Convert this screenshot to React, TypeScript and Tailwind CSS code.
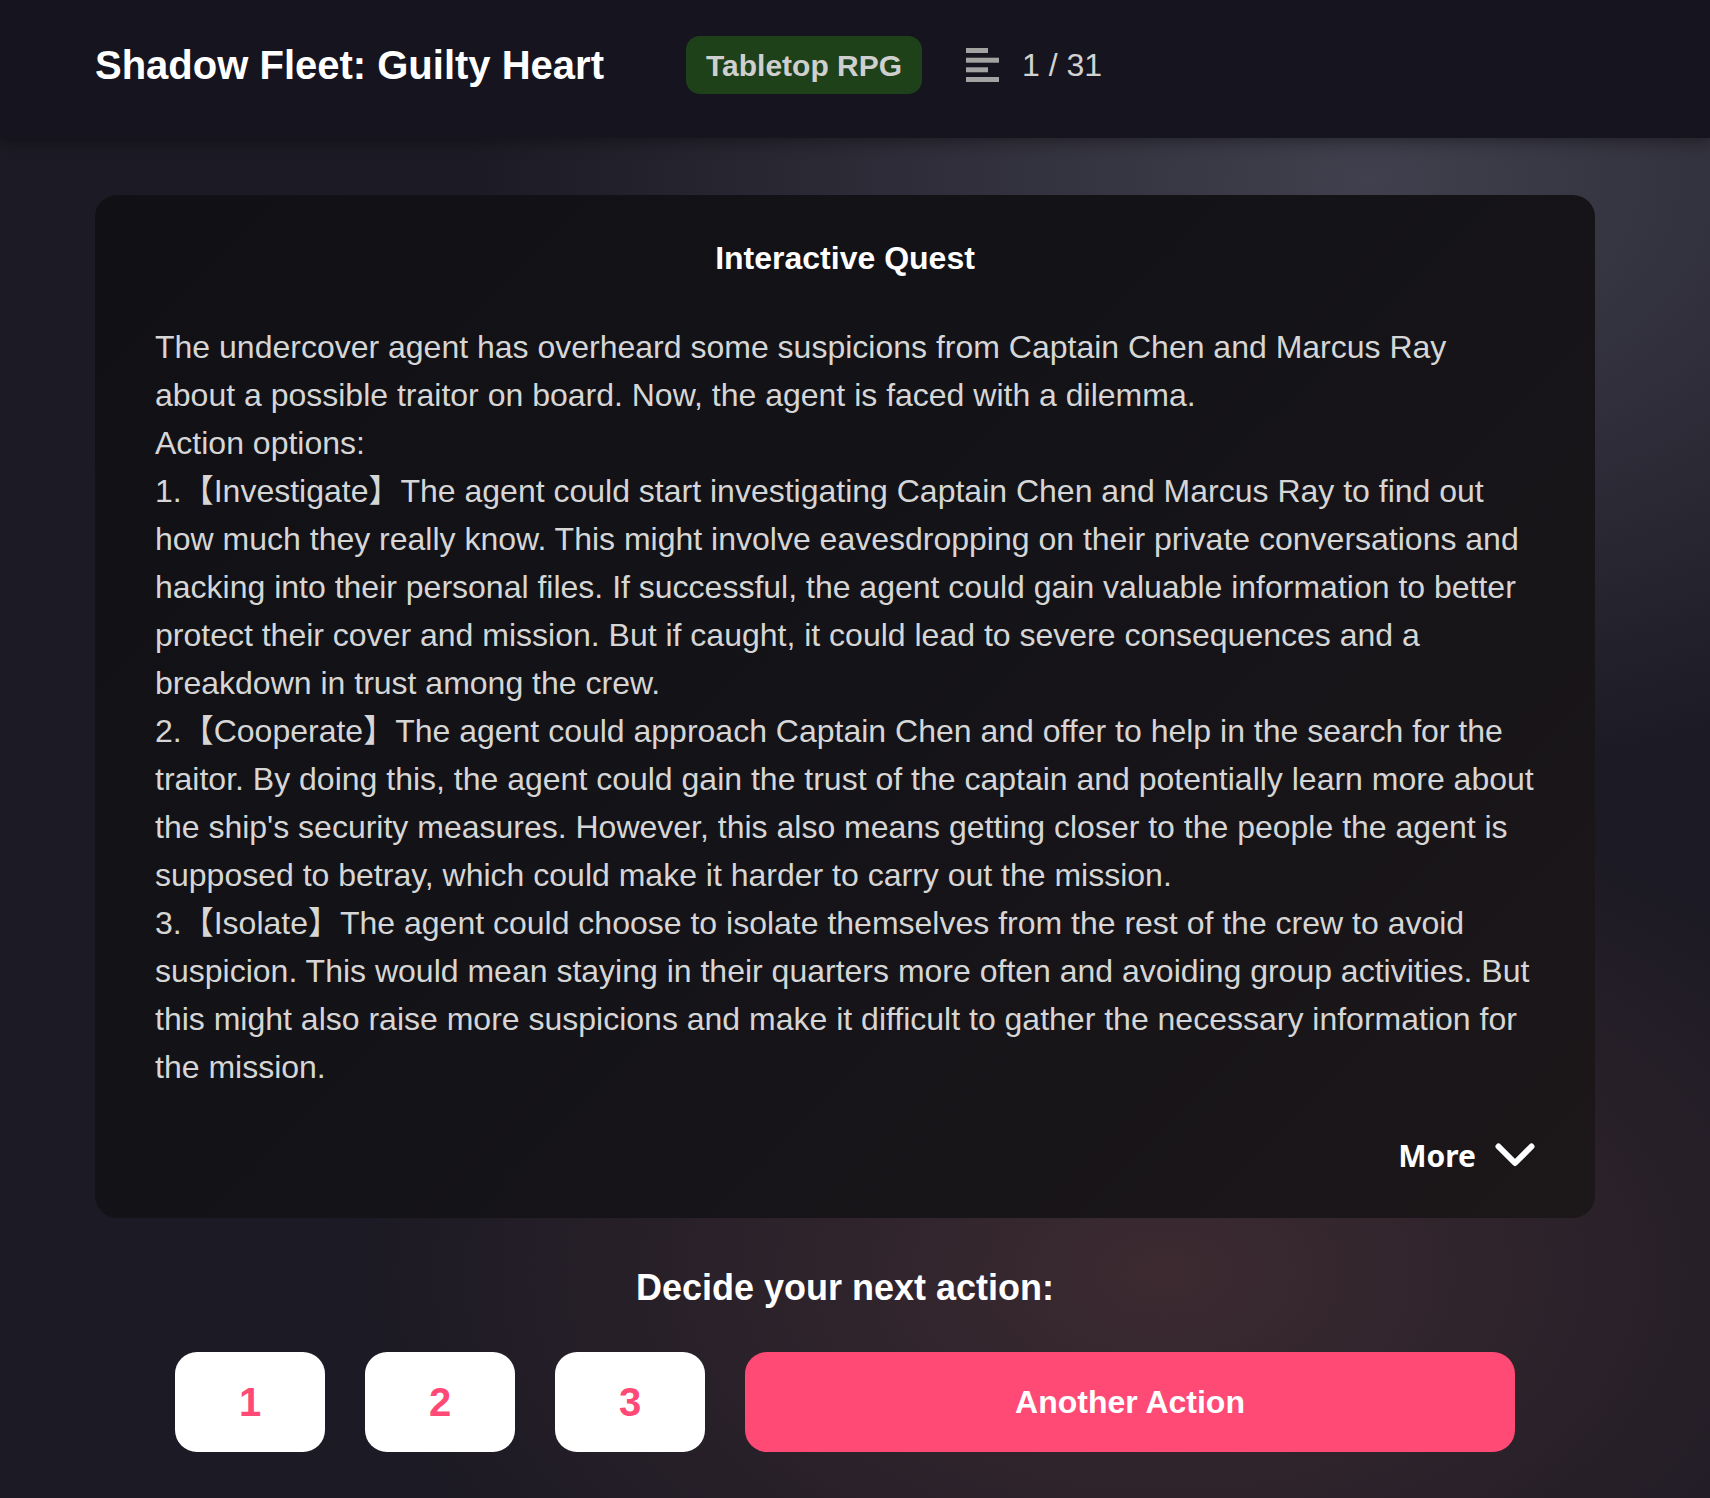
import React from 'react';

const lines = [
  'The undercover agent has overheard some suspicions from Captain Chen and Marcus Ray',
  'about a possible traitor on board. Now, the agent is faced with a dilemma.',
  'Action options:',
  '1.【Investigate】The agent could start investigating Captain Chen and Marcus Ray to find out',
  'how much they really know. This might involve eavesdropping on their private conversations and',
  'hacking into their personal files. If successful, the agent could gain valuable information to better',
  'protect their cover and mission. But if caught, it could lead to severe consequences and a',
  'breakdown in trust among the crew.',
  '2.【Cooperate】The agent could approach Captain Chen and offer to help in the search for the',
  'traitor. By doing this, the agent could gain the trust of the captain and potentially learn more about',
  "the ship's security measures. However, this also means getting closer to the people the agent is",
  'supposed to betray, which could make it harder to carry out the mission.',
  '3.【Isolate】The agent could choose to isolate themselves from the rest of the crew to avoid',
  'suspicion. This would mean staying in their quarters more often and avoiding group activities. But',
  'this might also raise more suspicions and make it difficult to gather the necessary information for',
  'the mission.',
];

function ListIcon() {
  return (
    <svg width="34" height="34" viewBox="0 0 34 34" className="ml-[44px]" fill="#a3a3a3">
      <rect x="0" y="0" width="22" height="5" />
      <rect x="0" y="9.7" width="33" height="5" />
      <rect x="0" y="19.3" width="22" height="5" />
      <rect x="0" y="29" width="33" height="5" />
    </svg>
  );
}

export default function App() {
  return (
    <div className="min-h-screen bg-[#1c1a24] bg-[radial-gradient(ellipse_900px_600px_at_80%_12%,rgba(66,66,80,0.95),transparent),radial-gradient(ellipse_800px_500px_at_68%_85%,rgba(64,44,50,0.9),transparent)] font-['Liberation_Sans','Noto_Sans_CJK_SC',sans-serif]">
      <header className="relative z-10 flex h-[138px] items-center bg-[#16151f] pb-[8px] pl-[95px] shadow-[0_4px_14px_rgba(0,0,0,0.35)]">
        <h1 className="text-[40px] font-bold leading-none text-white">Shadow Fleet: Guilty Heart</h1>
        <span className="ml-[82px] flex h-[58px] items-center rounded-[14px] bg-[#1e4119] px-[20px] text-[30px] font-bold text-[#cfcfcf]">
          Tabletop RPG
        </span>
        <ListIcon />
        <span className="ml-[22px] text-[32px] leading-none text-[#d2d2d2]">1 / 31</span>
      </header>

      <main className="ml-[95px] w-[1500px] pb-[46px] pt-[57px]">
        <section className="rounded-[22px] bg-[linear-gradient(135deg,#111015_0%,#141318_50%,#1c1719_100%)] px-[60px] pb-[39px] pt-[39px]">
          <h2 className="text-center text-[32px] font-bold leading-[48px] text-white">Interactive Quest</h2>
          <div className="mt-[41px] text-[32px] leading-[48px] text-[#d6d6d6]">
            {lines.map((line, i) => (
              <span key={i} className="block whitespace-nowrap">
                {line}
              </span>
            ))}
          </div>
          <div className="mt-[40px] flex h-[48px] items-center justify-end">
            <span className="font-['Noto_Sans',sans-serif] text-[30px] font-bold text-white">More</span>
            <svg width="40" height="24" viewBox="0 0 40 24" className="ml-[19px]" fill="none">
              <polyline
                points="3.5,3.5 20,20 36.5,3.5"
                stroke="white"
                strokeWidth="6"
                strokeLinecap="round"
                strokeLinejoin="round"
              />
            </svg>
          </div>
        </section>

        <h3 className="mt-[43px] text-center text-[36px] font-bold leading-[54px] text-white">Decide your next action:</h3>

        <div className="mt-[37px] flex justify-center gap-[40px]">
          {['1', '2', '3'].map((n) => (
            <button
              key={n}
              className="flex h-[100px] w-[150px] items-center justify-center rounded-[22px] bg-white text-[40px] font-bold text-[#ff4a76]"
            >
              {n}
            </button>
          ))}
          <button className="flex h-[100px] w-[770px] items-center justify-center rounded-[22px] bg-[#ff4a76] text-[32px] font-bold text-white">
            Another Action
          </button>
        </div>
      </main>
    </div>
  );
}
